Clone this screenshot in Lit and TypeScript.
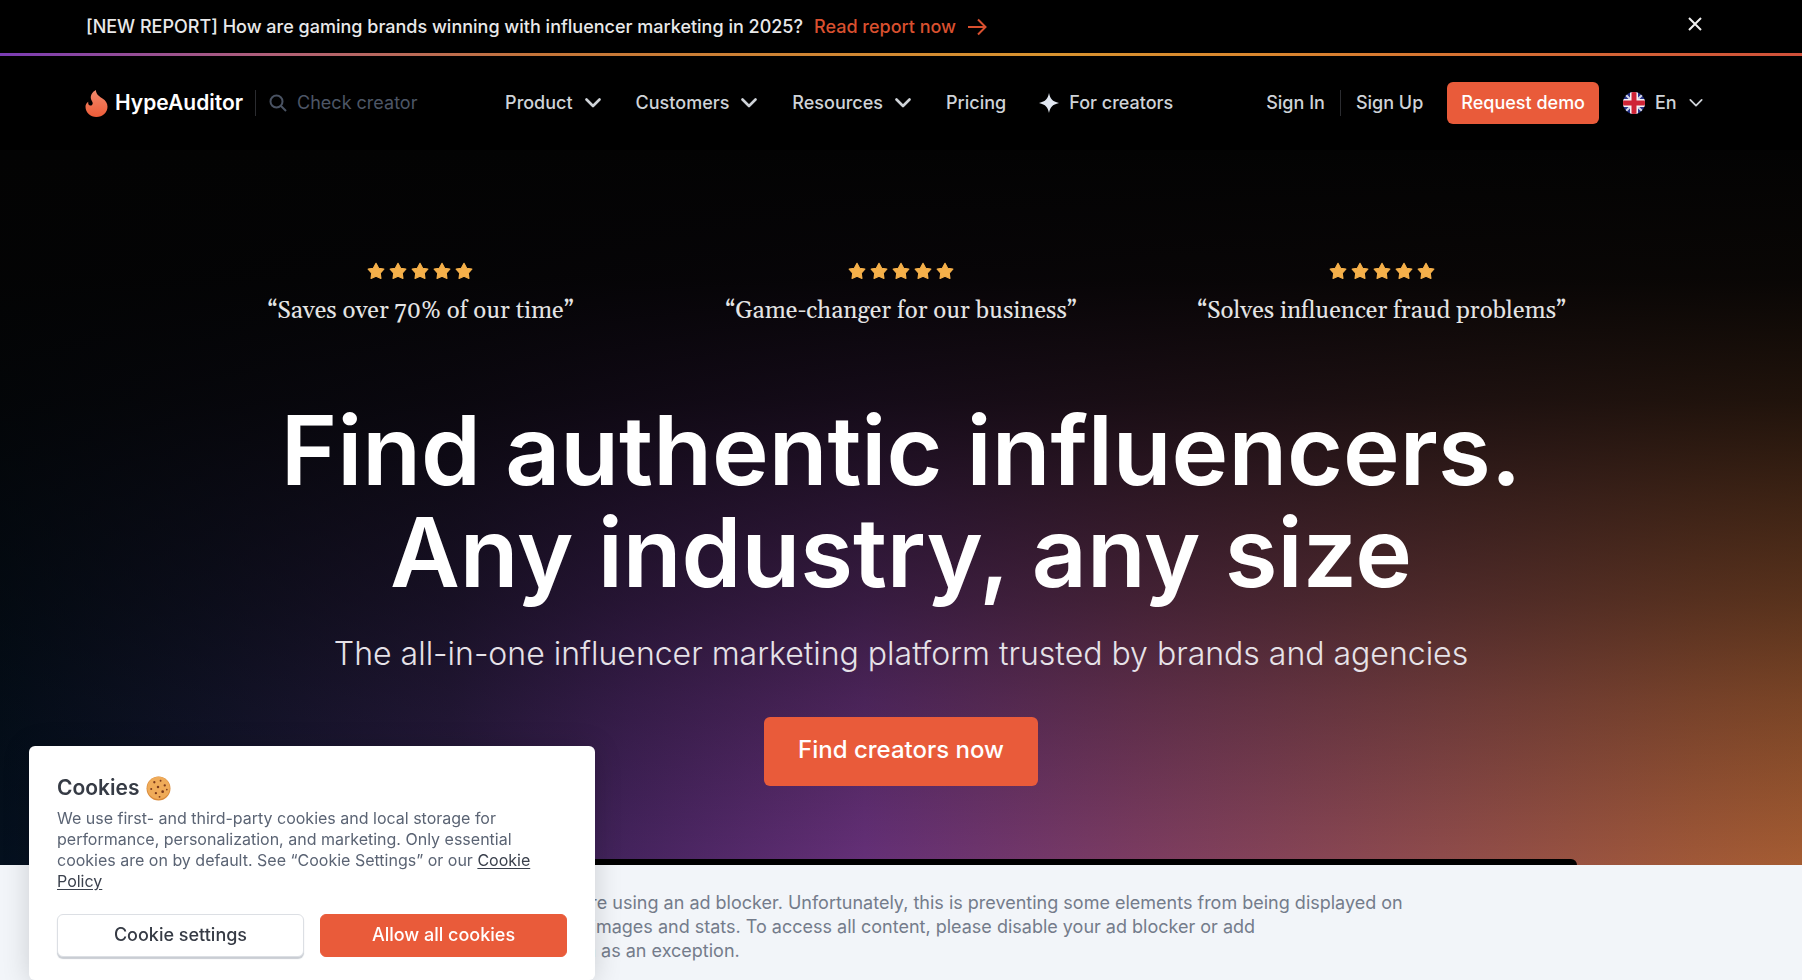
import { LitElement, html, css, svg } from "lit";
import { customElement, state } from "lit/decorators.js";

const chevron = html`<svg class="chevron" viewBox="0 0 16 16" aria-hidden="true"><path d="M1.5 4.5 8 11l6.5-6.5" /></svg>`;

const STAR = "M8 1.2 10.4 5.500 15 6.300 11.800 9.900 12.400 14.600 8 12.600 3.600 14.600 4.200 9.900 1 6.300 5.600 5.500Z";

const QUOTES = [
  "“Saves over 70% of our time”",
  "“Game-changer for our business”",
  "“Solves influencer fraud problems”",
];

const CHIPS: [number, number, number][] = [
  [8, 6, 1.1], [14, 4.6, 0.9], [18, 9, 1.1], [11.5, 10.5, 1.2],
  [5, 12.5, 1], [16, 15, 1.3], [9.5, 16.5, 1.1], [13, 20, 0.9], [20, 13, 0.8],
];

@customElement("app-announcement")
export class AppAnnouncement extends LitElement {
  static styles = css`
    :host { display: block; }
    .bar {
      display: flex;
      align-items: center;
      padding: 15px 100px 14px 86px;
      font-size: 18px;
      line-height: 24px;
      font-weight: 500;
      color: #e9e9ea;
    }
    .link {
      display: inline-flex;
      align-items: center;
      gap: 11px;
      margin-left: 11px;
      color: #d9502f;
      text-decoration: none;
    }
    .arrow { width: 20px; height: 18px; fill: none; stroke: currentColor; stroke-width: 2; }
    .close {
      margin: 0 0 7px auto;
      padding: 0;
      border: 0;
      background: none;
      color: #f0f0f0;
      width: 14px;
      height: 14px;
      display: block;
    }
    .cross { display: block; width: 14px; height: 14px; fill: none; stroke: currentColor; stroke-width: 2; }
    .rule {
      height: 3px;
      background: linear-gradient(90deg, #7a3cb4 0, #b05f78 15%, #c47438 30%, #d8932f 58%, #d9862e 70%, #d0503a 100%);
    }
  `;

  render() {
    return html`
      <div class="bar">
        <span>[NEW REPORT] How are gaming brands winning with influencer marketing in 2025?</span>
        <a class="link" href="#report">Read report now
          <svg class="arrow" viewBox="0 0 20 18" aria-hidden="true"><path d="M1 9h17M11 1.5 18.5 9 11 16.5" /></svg>
        </a>
        <button class="close" aria-label="Close" @click=${() => this.remove()}>
          <svg class="cross" viewBox="0 0 14 14" aria-hidden="true"><path d="m1 1 12 12M13 1 1 13" /></svg>
        </button>
      </div>
      <div class="rule"></div>
    `;
  }
}

@customElement("app-header")
export class AppHeader extends LitElement {
  static styles = css`
    :host { display: block; }
    .header {
      display: flex;
      align-items: center;
      box-sizing: border-box;
      height: 94px;
      padding: 0 99px 0 85px;
      font-size: 18px;
      line-height: 24px;
      font-weight: 500;
      color: #cfd3d8;
      white-space: nowrap;
    }
    a { color: inherit; text-decoration: none; }
    button { font: inherit; color: inherit; border: 0; background: none; padding: 0; }
    .logo { display: flex; align-items: center; gap: 7px; font-size: 21px; font-weight: 600; color: #fff; }
    .flame { width: 23px; height: 27px; }
    .divider { width: 1px; height: 26px; background: #2b2c30; }
    .logo-divider { margin-left: 12px; }
    .search { display: flex; align-items: center; gap: 10px; width: 236px; padding-left: 13px; }
    .lens { flex: none; width: 18px; height: 18px; fill: none; stroke: #4a5363; stroke-width: 2; }
    .input {
      min-width: 0;
      flex: 1;
      padding: 0;
      border: 0;
      outline: 0;
      background: none;
      font: inherit;
      font-weight: 400;
      color: #cfd3d8;
    }
    .input::placeholder { color: #4d5666; opacity: 1; }
    .nav { display: flex; align-items: center; gap: 35px; }
    .item { display: flex; align-items: center; gap: 12px; }
    .chevron { width: 16px; height: 16px; fill: none; stroke: currentColor; stroke-width: 2.6; stroke-linecap: round; stroke-linejoin: round; }
    .spark { width: 20px; height: 20px; fill: #e2e8f2; }
    .creators { gap: 10px; margin-left: -2px; }
    .account { display: flex; align-items: center; margin-left: auto; gap: 15px; }
    .demo {
      margin-left: 9px;
      height: 42px;
      padding: 0 14px;
      border-radius: 6px;
      background: #e95b3a;
      color: #fff;
      display: flex;
      align-items: center;
    }
    .lang { display: flex; align-items: center; margin-left: 9px; }
    .flag { width: 22px; height: 22px; margin-right: 10px; }
    .select {
      appearance: none;
      border: 0;
      padding: 0;
      margin: 0 12px 0 0;
      background: none;
      font: inherit;
      color: inherit;
    }
    .lang .chevron { width: 14px; height: 14px; stroke-width: 2; }
  `;

  render() {
    return html`
      <header class="header">
        <a class="logo" href="#home">
          <svg class="flame" viewBox="0 0 23 27" aria-hidden="true">
            <defs>
              <linearGradient id="flame" x1="0" y1="0" x2="0" y2="1">
                <stop offset="0" stop-color="#f08a6c" /><stop offset="1" stop-color="#ee5c38" />
              </linearGradient>
            </defs>
            <path fill="url(#flame)" d="M10.8 0C7 2.2 5.200 5.600 6 9c.3 1.400 1.500 2.400 1.700 4 .2 1.700-1.200 2.900-2.700 2.500-1.500-.4-2.100-1.800-1.700-3.700C1.400 13 .5 14.800.5 16.800.5 22.500 5.300 27 11.400 27c6.300 0 11.100-4.400 11.100-10.200 0-3.700-2-6.500-5-8.400C14.400 6.500 11.200 4.600 10.800 0Z" />
          </svg>
          HypeAuditor
        </a>
        <span class="divider logo-divider"></span>
        <label class="search">
          <svg class="lens" viewBox="0 0 18 18" aria-hidden="true"><circle cx="7.500" cy="7.500" r="6" /><path d="m12 12 5 5" /></svg>
          <input class="input" type="search" placeholder="Check creator" aria-label="Check creator" />
        </label>
        <nav class="nav">
          <button class="item">Product ${chevron}</button>
          <button class="item">Customers ${chevron}</button>
          <button class="item">Resources ${chevron}</button>
          <a href="#pricing">Pricing</a>
          <a class="item creators" href="#creators">
            <svg class="spark" viewBox="0 0 20 20" aria-hidden="true"><path d="M10 0c1.200 5.800 3.200 8.400 10 10-6.800 1.600-8.800 4.200-10 10C8.800 14.200 6.800 11.600 0 10 6.800 8.400 8.800 5.800 10 0Z" /></svg>
            For creators
          </a>
        </nav>
        <div class="account">
          <a href="#sign-in">Sign In</a>
          <span class="divider"></span>
          <a href="#sign-up">Sign Up</a>
          <a class="demo" href="#demo">Request demo</a>
          <label class="lang">
            <svg class="flag" viewBox="0 0 22 22" aria-hidden="true">
              <defs><clipPath id="disc"><circle cx="11" cy="11" r="11" /></clipPath></defs>
              <g clip-path="url(#disc)">
                <rect width="22" height="22" fill="#27348b" />
                <path d="M0 0l22 22M22 0 0 22" stroke="#d5d6e6" stroke-width="2" />
                <path d="M11 0v22M0 11h22" stroke="#f3f3f6" stroke-width="8" />
                <path d="M11 0v22M0 11h22" stroke="#cf2436" stroke-width="5" />
              </g>
            </svg>
            <select class="select" aria-label="Language"><option>En</option></select>
            ${chevron}
          </label>
        </div>
      </header>
    `;
  }
}

@customElement("app-hero")
export class AppHero extends LitElement {
  static styles = css`
    :host { display: flex; flex-direction: column; }
    .hero {
      flex: 1;
      display: flex;
      flex-direction: column;
      align-items: center;
      padding-top: 112px;
      color: #fff;
      text-align: center;
      background:
        linear-gradient(180deg, #030303 0%, rgb(3 3 3 / 96%) 18%, rgb(3 3 3 / 82%) 35%, rgb(3 3 3 / 64%) 49%, rgb(3 3 3 / 47%) 63%, rgb(3 3 3 / 27%) 77%, rgb(3 3 3 / 0%) 100%),
        linear-gradient(90deg, #04101e 0%, #14162f 12%, #2a1c42 25%, #46245f 35%, #653078 48%, #7c3c62 63%, #904c4c 80%, #a05838 94%, #a55c32 100%);
    }
    .quotes { display: grid; grid-template-columns: repeat(3, 1fr); width: 80%; }
    .quote { margin: 0; display: flex; flex-direction: column; align-items: center; }
    .stars { display: flex; gap: 4px; }
    .star { width: 18px; height: 18px; fill: #f5b04a; stroke: #f5b04a; stroke-linejoin: round; }
    .words { margin: 15px 0 0; font-family: Georgia, Gelasio, "Liberation Serif", serif; font-variant-numeric: oldstyle-nums; font-size: 24px; line-height: 32px; color: #e4e4e4; }
    .title { margin: 72px 0 0; font-size: 96px; line-height: 102px; font-weight: 600; }
    .lead { margin: 27px 0 0; font-size: 32px; line-height: 48px; font-weight: 300; color: #e6e2e8; }
    .cta {
      display: flex;
      align-items: center;
      box-sizing: border-box;
      margin-top: 39px;
      height: 69px;
      padding: 0 34px 3px;
      border-radius: 6px;
      background: #e95b3a;
      color: #fff;
      font-size: 24px;
      line-height: 32px;
      font-weight: 500;
      text-decoration: none;
    }
    .frame { width: 75%; height: 6px; margin-top: auto; border-radius: 8px 8px 0 0; background: #000; }
  `;

  render() {
    return html`
      <main class="hero">
        <div class="quotes">
          ${QUOTES.map(
            (q) => html`<blockquote class="quote">
              <div class="stars" role="img" aria-label="5 stars">
                ${[1, 2, 3, 4, 5].map(() => html`<svg class="star" viewBox="0 0 16 16" aria-hidden="true"><path d=${STAR} /></svg>`)}
              </div>
              <p class="words">${q}</p>
            </blockquote>`,
          )}
        </div>
        <h1 class="title">Find authentic influencers.<br />Any industry, any size</h1>
        <p class="lead">The all-in-one influencer marketing platform trusted by brands and agencies</p>
        <a class="cta" href="#start">Find creators now</a>
        <div class="frame"></div>
      </main>
    `;
  }
}

@customElement("app-cookies")
export class AppCookies extends LitElement {
  static styles = css`
    :host { display: block; }
    .card {
      box-sizing: border-box;
      width: 566px;
      padding: 28px 28px 23px;
      border-radius: 6px;
      background: #fff;
      box-shadow: 0 2px 28px rgb(0 0 0 / 16%);
      color: #5b6474;
      font-size: 16px;
      line-height: 21px;
    }
    .heading { display: flex; align-items: center; gap: 7px; margin: 0; font-size: 21px; line-height: 28px; font-weight: 600; color: #363b45; }
    .cookie { width: 25px; height: 25px; }
    .text { margin: 6px 0 0; }
    .policy { color: #3b414d; text-underline-offset: 2px; }
    .actions { display: grid; grid-template-columns: 1fr 1fr; gap: 16px; margin-top: 22px; }
    .button {
      height: 43px;
      padding: 0 0 2px;
      border: 1px solid #dcdfe4;
      border-radius: 6px;
      background: #fff;
      box-shadow: 0 2px 1px #c9cdd3;
      font: inherit;
      font-size: 18px;
      line-height: 24px;
      font-weight: 500;
      color: #363b45;
    }
    .primary { border-color: #e95b3a; background: #e95b3a; box-shadow: none; color: #fff; }
  `;

  render() {
    return html`
      <section class="card" aria-label="Cookies">
        <h2 class="heading">
          Cookies
          <svg class="cookie" viewBox="0 0 24 24" aria-hidden="true">
            <circle cx="12" cy="12" r="11.500" fill="#d98a3a" />
            <circle cx="12" cy="11.400" r="10.800" fill="#efab59" />
            ${CHIPS.map(([x, y, r]) => svg`<circle cx=${x} cy=${y} r=${r} fill="#7c3a1c" />`)}
          </svg>
        </h2>
        <p class="text">
          We use first- and third-party cookies and local storage for performance, personalization, and marketing. Only
          essential cookies are on by default. See “Cookie Settings” or our <a class="policy" href="#policy">Cookie Policy</a>
        </p>
        <div class="actions">
          <button class="button">Cookie settings</button>
          <button class="button primary" @click=${() => this.dispatchEvent(new Event("accept"))}>Allow all cookies</button>
        </div>
      </section>
    `;
  }
}

@customElement("app-root")
export class AppRoot extends LitElement {
  static styles = css`
    :host {
      display: flex;
      flex-direction: column;
      min-height: 100vh;
      background: #000;
      font-family: Inter, "Liberation Sans", sans-serif;
    }
    .hero { flex: 1; }
    .notice { padding: 26px 0 17px; background: #f2f5f9; color: #747c8b; font-size: 18px; line-height: 24px; }
    .message { width: 55%; margin: 0 auto; white-space: nowrap; }
    .cookies { position: fixed; left: 29px; bottom: 0; }
  `;

  @state() private accepted = false;

  render() {
    return html`
      <app-announcement></app-announcement>
      <app-header></app-header>
      <app-hero class="hero"></app-hero>
      <aside class="notice">
        <p class="message">
          We noticed that you are using an ad blocker. Unfortunately, this is preventing some elements from being displayed on<br />
          HypeAuditor, such as images and stats. To access all content, please disable your ad blocker or add<br />
          www.hypeauditor.com as an exception.
        </p>
      </aside>
      ${this.accepted ? null : html`<app-cookies class="cookies" @accept=${() => (this.accepted = true)}></app-cookies>`}
    `;
  }
}
